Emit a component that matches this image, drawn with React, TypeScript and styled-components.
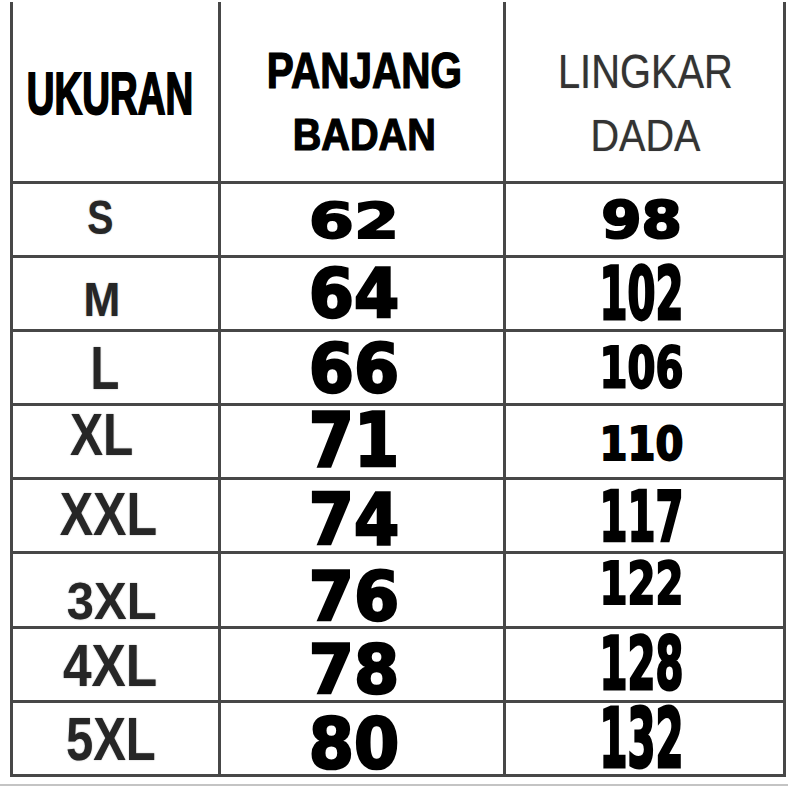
import React from "react";
import styled, { createGlobalStyle } from "styled-components";

const Global = createGlobalStyle`
  html, body { margin: 0; padding: 0; background: #ffffff; }
  body { width: 788px; height: 788px; overflow: hidden; font-family: "Liberation Sans", Arial, sans-serif; }
`;

const Page = styled.div`
  width: 788px;
  height: 788px;
  background: #fff;
  padding-top: 2px;
  box-sizing: border-box;
`;

const Table = styled.div`
  margin-left: 10px;
  width: 776px;
  display: grid;
  grid-template-columns: 208px 285px 280px;
  grid-template-rows: 182px repeat(8, 74.1px);
  border-left: 3px solid #474747;
  box-sizing: border-box;
`;

const Cell = styled.div`
  border-right: 3px solid #474747;
  border-bottom: 3px solid #474747;
  box-sizing: border-box;
  display: flex;
  flex-direction: column;
  align-items: center;
  justify-content: center;
  overflow: visible;
`;

const Shift = styled.div<{ $dx: number; $dy: number }>`
  display: flex;
  flex-direction: column;
  align-items: center;
  transform: translate(${(p) => p.$dx}px, ${(p) => p.$dy}px);
`;

const HeadLine = styled.span<{ $size: number; $sx: number; $heavy?: boolean; $color?: string; $stroke?: number }>`
  display: block;
  height: 64px;
  line-height: 64px;
  font-family: "Liberation Sans", Arial, sans-serif;
  font-weight: ${(p) => (p.$heavy ? 700 : 400)};
  font-size: ${(p) => p.$size}px;
  color: ${(p) => p.$color ?? "#000"};
  -webkit-text-stroke: ${(p) => p.$stroke ?? 0}px ${(p) => p.$color ?? "#000"};
  text-shadow: 0 0 1px rgba(0, 0, 0, 0.4);
  transform: scaleX(${(p) => p.$sx});
  white-space: nowrap;
`;

const SizeLabel = styled.span<{ $size: number; $sx: number; $dx: number; $dy: number }>`
  display: inline-block;
  line-height: 1;
  font-family: "Liberation Sans", Arial, sans-serif;
  font-weight: 700;
  font-size: ${(p) => p.$size}px;
  color: #262626;
  text-shadow: 0 0 1.5px rgba(0, 0, 0, 0.45);
  transform: translate(${(p) => p.$dx}px, ${(p) => p.$dy}px) scaleX(${(p) => p.$sx});
  white-space: nowrap;
`;

const WideNum = styled.span<{ $size: number; $sy: number; $dx: number; $dy: number }>`
  display: inline-block;
  line-height: 1;
  font-family: "DejaVu Sans", sans-serif;
  font-weight: 700;
  font-size: ${(p) => p.$size}px;
  color: #000;
  -webkit-text-stroke: 2.4px #000;
  transform: translate(${(p) => p.$dx}px, ${(p) => p.$dy}px) scaleY(${(p) => p.$sy});
  white-space: nowrap;
`;

const NarrowNum = styled.span<{ $sy: number; $dy: number }>`
  display: inline-block;
  line-height: 1;
  font-family: "DejaVu Sans Condensed", "DejaVu Sans", sans-serif;
  font-weight: 700;
  font-size: 58px;
  color: #000;
  -webkit-text-stroke: 2.2px #000;
  transform: translate(-3px, ${(p) => p.$dy}px) scale(0.77, ${(p) => p.$sy});
  white-space: nowrap;
`;

const BottomRule = styled.div`
  margin-top: 7px;
  height: 2px;
  width: 788px;
  background: #c4c4c4;
`;

type Row = {
  size: string;
  sizeFont: number;
  sizeSx: number;
  sizeDx: number;
  sizeDy: number;
  len: string;
  lenSy: number;
  lenDy: number;
  chest: string;
  chestSy: number;
  chestDy: number;
  chestWide?: boolean;
};

const rows: Row[] = [
  { size: "S", sizeFont: 49, sizeSx: 0.8, sizeDx: -15, sizeDy: -2, len: "62", lenSy: 0.76, lenDy: 1, chest: "98", chestSy: 0.9, chestDy: 0, chestWide: true },
  { size: "M", sizeFont: 48, sizeSx: 0.92, sizeDx: -14, sizeDy: 6, len: "64", lenSy: 1.05, lenDy: 0, chest: "102", chestSy: 1.25, chestDy: 0 },
  { size: "L", sizeFont: 62, sizeSx: 0.76, sizeDx: -11, sizeDy: 0, len: "66", lenSy: 1.05, lenDy: 1, chest: "106", chestSy: 0.99, chestDy: 0 },
  { size: "XL", sizeFont: 59, sizeSx: 0.84, sizeDx: -14, sizeDy: -6, len: "71", lenSy: 1.14, lenDy: -1, chest: "110", chestSy: 0.8, chestDy: 2 },
  { size: "XXL", sizeFont: 61, sizeSx: 0.82, sizeDx: -7, sizeDy: -1, len: "74", lenSy: 1.1, lenDy: 4, chest: "117", chestSy: 1.2, chestDy: 1 },
  { size: "3XL", sizeFont: 52, sizeSx: 0.94, sizeDx: -4, sizeDy: 11, len: "76", lenSy: 1.05, lenDy: 6, chest: "122", chestSy: 1.01, chestDy: -6 },
  { size: "4XL", sizeFont: 59, sizeSx: 0.87, sizeDx: -5, sizeDy: 2, len: "78", lenSy: 1.05, lenDy: 5, chest: "128", chestSy: 1.25, chestDy: 0 },
  { size: "5XL", sizeFont: 62, sizeSx: 0.79, sizeDx: -5, sizeDy: 1, len: "80", lenSy: 1.08, lenDy: 5, chest: "132", chestSy: 1.4, chestDy: 1 },
];

export default function App() {
  return (
    <Page>
      <Global />
      <Table>
        <Cell>
          <Shift $dx={-6} $dy={2}>
            <HeadLine $size={60} $sx={0.64} $stroke={2} $heavy>UKURAN</HeadLine>
          </Shift>
        </Cell>
        <Cell>
          <Shift $dx={2} $dy={11}>
            <HeadLine $size={50} $sx={0.81} $stroke={1.2} $heavy>PANJANG</HeadLine>
            <HeadLine $size={45} $sx={0.88} $stroke={1.2} $heavy>BADAN</HeadLine>
          </Shift>
        </Cell>
        <Cell>
          <Shift $dx={1} $dy={12}>
            <HeadLine $size={48} $sx={0.83} $color="#333">LINGKAR</HeadLine>
            <HeadLine $size={45} $sx={0.88} $color="#333">DADA</HeadLine>
          </Shift>
        </Cell>
        {rows.map((r) => (
          <React.Fragment key={r.size}>
            <Cell>
              <SizeLabel $size={r.sizeFont} $sx={r.sizeSx} $dx={r.sizeDx} $dy={r.sizeDy}>{r.size}</SizeLabel>
            </Cell>
            <Cell>
              <WideNum $size={65} $sy={r.lenSy} $dx={-8} $dy={r.lenDy}>{r.len}</WideNum>
            </Cell>
            <Cell>
              {r.chestWide ? (
                <WideNum $size={58} $sy={r.chestSy} $dx={-3} $dy={r.chestDy}>{r.chest}</WideNum>
              ) : (
                <NarrowNum $sy={r.chestSy} $dy={r.chestDy}>{r.chest}</NarrowNum>
              )}
            </Cell>
          </React.Fragment>
        ))}
      </Table>
      <BottomRule />
    </Page>
  );
}
